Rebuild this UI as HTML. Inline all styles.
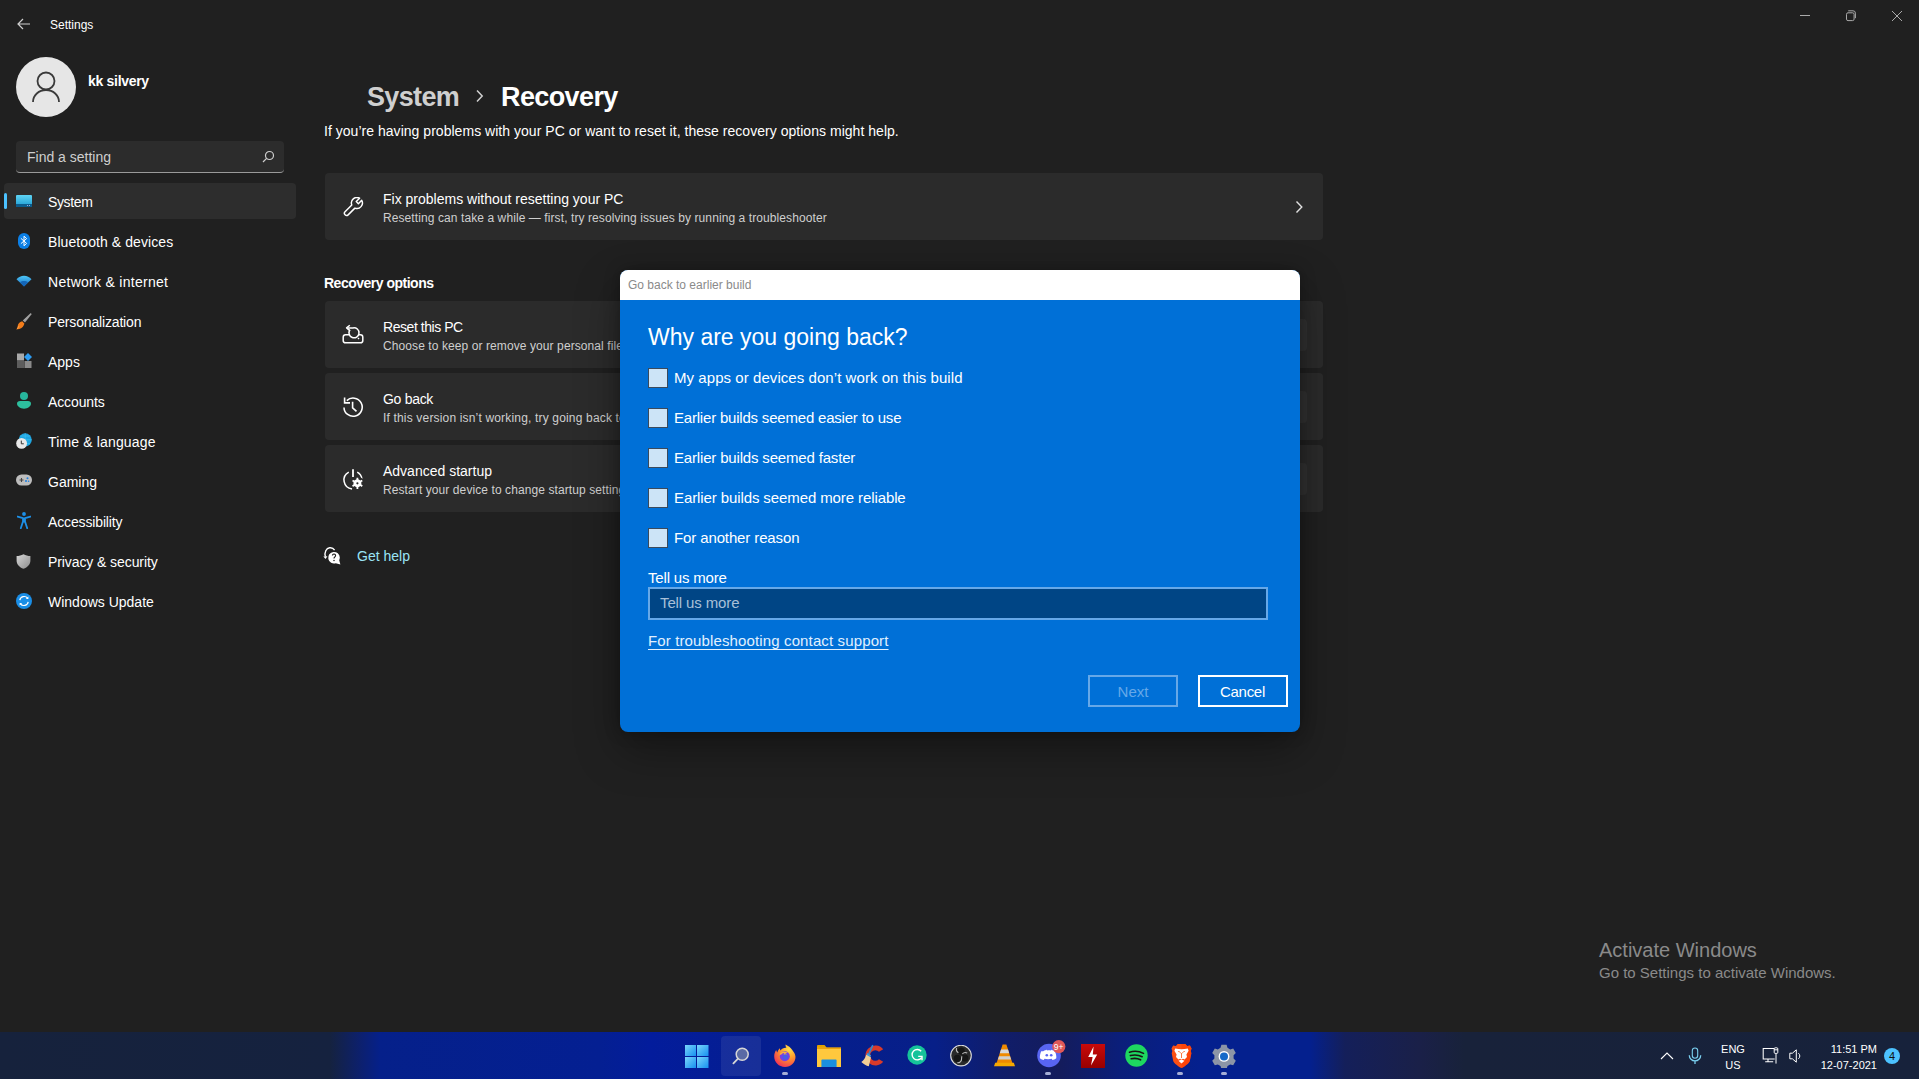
<!DOCTYPE html>
<html><head><meta charset="utf-8">
<style>
*{margin:0;padding:0;box-sizing:border-box}
html,body{width:1919px;height:1079px;overflow:hidden;background:#202020;font-family:"Liberation Sans",sans-serif;color:#fff}
.a{position:absolute;white-space:nowrap}
.nav{position:absolute;left:48px;font-size:14px;color:#fff;line-height:16px}
.ico{position:absolute}
.card{position:absolute;left:325px;width:998px;height:67px;background:#2b2b2b;border-radius:4px}
.ct{position:absolute;left:58px;top:18px;font-size:14px;color:#fff;line-height:16px}
.cs{position:absolute;left:58px;top:37.5px;font-size:12px;color:#cfcfcf;line-height:14px;letter-spacing:0.09px}
.cb{position:absolute;left:648px;width:20px;height:20px;background:#cce4f7;border:1px solid #3a4a5c}
.cl{position:absolute;left:674px;font-size:15px;color:#fff;line-height:18px}
</style></head><body>
<!-- title bar -->
<svg class="ico" style="left:17px;top:18px" width="14" height="12" viewBox="0 0 14 12"><path d="M6 1L1 6l5 5M1 6h12" stroke="#cfcfcf" stroke-width="1.2" fill="none"/></svg>
<div class="a" style="left:50px;top:18px;font-size:12px;line-height:14px;color:#fff">Settings</div>
<svg class="ico" style="left:1800px;top:15px" width="12" height="2"><rect width="10" height="1" fill="#aaa"/></svg>
<svg class="ico" style="left:1845px;top:10px" width="12" height="12" viewBox="0 0 12 12"><rect x="1.5" y="2.8" width="7.6" height="7.8" rx="1.5" stroke="#aaa" fill="none"/><path d="M3.2 0.8h4.8a2.4 2.4 0 0 1 2.4 2.4v5" stroke="#aaa" fill="none"/></svg>
<svg class="ico" style="left:1891px;top:10px" width="12" height="12" viewBox="0 0 12 12"><path d="M1 1l10 10M11 1L1 11" stroke="#aaa" stroke-width="1"/></svg>

<!-- profile -->
<div class="a" style="left:16px;top:57px;width:60px;height:60px;border-radius:50%;background:#e6e6e6"></div>
<svg class="ico" style="left:32px;top:71px" width="28" height="32" viewBox="0 0 28 32"><circle cx="14" cy="10" r="8.5" stroke="#3a3a3a" stroke-width="1.8" fill="none"/><path d="M1 31a13 12 0 0 1 26 0" stroke="#3a3a3a" stroke-width="1.8" fill="none"/></svg>
<div class="a" style="left:88px;top:72px;font-size:14px;font-weight:bold;line-height:18px;letter-spacing:-0.3px">kk silvery</div>

<!-- search -->
<div class="a" style="left:16px;top:141px;width:268px;height:32px;background:#2c2c2c;border-radius:4px;border-bottom:1px solid #9a9a9a"></div>
<div class="a" style="left:27px;top:149px;font-size:14px;line-height:16px;color:#cfcfcf">Find a setting</div>
<svg class="ico" style="left:262px;top:150px" width="13" height="13" viewBox="0 0 13 13"><circle cx="7.5" cy="5.5" r="4" stroke="#cfcfcf" stroke-width="1.2" fill="none"/><path d="M4.6 8.4L1 12" stroke="#cfcfcf" stroke-width="1.2"/></svg>

<!-- nav -->
<div class="a" style="left:4px;top:183px;width:292px;height:36px;background:#2d2d2d;border-radius:4px"></div>
<div class="a" style="left:4px;top:193px;width:3px;height:16px;background:#4cc2ff;border-radius:2px"></div>
<svg class="ico" style="left:16px;top:195px" width="16" height="12" viewBox="0 0 16 12"><defs><linearGradient id="gs" x1="0" y1="0" x2="0" y2="1"><stop offset="0" stop-color="#5fd4f4"/><stop offset="1" stop-color="#1b9ad0"/></linearGradient></defs><rect x="0" y="0" width="16" height="12" rx="1" fill="url(#gs)"/><rect x="0" y="9" width="16" height="3" fill="#0c5c8c"/><rect x="11" y="10" width="1" height="1" fill="#9ad"/><rect x="13" y="10" width="1" height="1" fill="#9ad"/></svg>
<svg class="ico" style="left:18px;top:233px" width="12" height="16" viewBox="0 0 12 16"><rect x="0" y="0" width="12" height="16" rx="6" fill="#0b7fe6"/><path d="M3.2 5.6L8.6 10.4 6 12.8V3.2l2.6 2.4L3.2 10.4" stroke="#fff" stroke-width="1" fill="none" stroke-linejoin="round" stroke-linecap="round"/></svg>
<svg class="ico" style="left:16px;top:275px" width="16" height="12" viewBox="0 0 16 12"><defs><linearGradient id="gw" x1="0" y1="0" x2="0" y2="1"><stop offset="0" stop-color="#4cc6f6"/><stop offset="1" stop-color="#1a6fc8"/></linearGradient></defs><path d="M0.5 4.2C2.5 2 5 0.8 8 0.8s5.5 1.2 7.5 3.4L8 11.5z" fill="url(#gw)"/><path d="M4 7.3C5.1 6.4 6.5 5.9 8 5.9s2.9.5 4 1.4L8 11.5z" fill="#1466b8"/></svg>
<svg class="ico" style="left:16px;top:313px" width="16" height="17" viewBox="0 0 16 17"><defs><linearGradient id="gbr" x1="0" y1="0" x2="1" y2="1"><stop offset="0" stop-color="#c8c8c8"/><stop offset="1" stop-color="#7a7a7a"/></linearGradient></defs><path d="M14.2 0.4c.8-.2 1.4.4 1.2 1.2L9 9.6 6.8 7.4z" fill="url(#gbr)"/><path d="M6.2 8.2l2.2 2.2c-.4 2.6-2.4 4.8-5.2 5.6-1 .3-2.2.4-3 .4.8-.8 1.2-1.8 1.4-3 .4-2.6 2-4.6 4.6-5.2z" fill="#f37c1a"/><path d="M1.4 15.8c.6-.8 1-1.6 1.4-2.6" stroke="#ffb060" stroke-width="0.8" fill="none"/></svg>
<svg class="ico" style="left:17px;top:353px" width="16" height="16" viewBox="0 0 16 16"><rect x="0" y="0.5" width="7" height="7" fill="#a9a9a9"/><rect x="0" y="8" width="7" height="7" fill="#5d5d5d"/><rect x="7.5" y="8" width="7" height="7" fill="#8a8a8a"/><path d="M11 0L15 4 11 8 7 4z" fill="#2d9cf2"/></svg>
<svg class="ico" style="left:17px;top:392px" width="14" height="17" viewBox="0 0 14 17"><circle cx="7" cy="4" r="4" fill="#27b59c"/><path d="M0 11.5C0 10 1.2 9 3 9h8c1.8 0 3 1 3 2.5 0 2.7-3 5.2-7 5.2s-7-2.5-7-5.2z" fill="#2dbf9e"/></svg>
<svg class="ico" style="left:16px;top:433px" width="16" height="16" viewBox="0 0 16 16"><circle cx="9.2" cy="6.8" r="6.6" fill="#1ea4e0"/><path d="M9.2 0.2v13.2M2.8 6.8h12.8M4.3 3h9.8M4.3 10.6h9.8" stroke="#3fc4f4" stroke-width="0.6"/><circle cx="5.6" cy="10.4" r="5.4" fill="#e8e8e8"/><path d="M5.3 7.6v3.2h2.5" stroke="#333" stroke-width="1" fill="none"/></svg>
<svg class="ico" style="left:16px;top:474px" width="16" height="12" viewBox="0 0 16 12"><rect x="0" y="0.5" width="16" height="11" rx="5.5" fill="#bdbdbd"/><path d="M3.5 6h4M5.5 4v4" stroke="#444" stroke-width="1.1"/><circle cx="11.5" cy="4.3" r="1" fill="#1e7fe0"/><circle cx="10" cy="7" r="1" fill="#1e7fe0"/><circle cx="12.6" cy="7.3" r="0.8" fill="#1e7fe0"/></svg>
<svg class="ico" style="left:17px;top:512px" width="14" height="17" viewBox="0 0 14 17"><circle cx="7" cy="2" r="1.9" fill="#1d8fe6"/><path d="M0.6 4.6L6 6.2v3.3L3.8 16.2M13.4 4.6L8 6.2v3.3l2.2 6.7M6 9.5h2" stroke="#1d8fe6" stroke-width="1.8" fill="none" stroke-linecap="round" stroke-linejoin="round"/><rect x="6" y="5.8" width="2" height="4" fill="#1d8fe6"/></svg>
<svg class="ico" style="left:16px;top:554px" width="15" height="15" viewBox="0 0 15 15"><defs><linearGradient id="gsh" x1="0" y1="0" x2="1" y2="1"><stop offset="0" stop-color="#d6d6d6"/><stop offset="1" stop-color="#8c8c8c"/></linearGradient></defs><path d="M7.5 0.3C5.3 1.5 3 2 0.6 2.1v4.3c0 4 2.8 6.7 6.9 8.3 4.1-1.6 6.9-4.3 6.9-8.3V2.1C12 2 9.7 1.5 7.5 0.3z" fill="url(#gsh)"/></svg>
<svg class="ico" style="left:16px;top:593px" width="16" height="16" viewBox="0 0 16 16"><circle cx="8" cy="8" r="8" fill="#1a8ee6"/><path d="M3.8 7.2A4.4 4.4 0 0 1 11.6 5.2M12.2 8.8A4.4 4.4 0 0 1 4.4 10.8" stroke="#fff" stroke-width="1.2" fill="none"/><path d="M12.4 3.4v2.6H9.8z" fill="#fff"/><path d="M3.6 12.6V10h2.6z" fill="#fff"/></svg>
<div class="nav" style="top:194px;letter-spacing:-0.36px">System</div>
<div class="nav" style="top:234px;letter-spacing:0.08px">Bluetooth &amp; devices</div>
<div class="nav" style="top:274px;letter-spacing:0.28px">Network &amp; internet</div>
<div class="nav" style="top:314px;letter-spacing:-0.16px">Personalization</div>
<div class="nav" style="top:354px">Apps</div>
<div class="nav" style="top:394px;letter-spacing:-0.12px">Accounts</div>
<div class="nav" style="top:434px;letter-spacing:0.15px">Time &amp; language</div>
<div class="nav" style="top:474px">Gaming</div>
<div class="nav" style="top:514px;letter-spacing:-0.14px">Accessibility</div>
<div class="nav" style="top:554px;letter-spacing:-0.09px">Privacy &amp; security</div>
<div class="nav" style="top:594px">Windows Update</div>

<!-- main -->
<div class="a" style="left:367px;top:81px;font-size:27px;line-height:32px;color:#cfcfcf;font-weight:bold;letter-spacing:-0.65px">System</div>
<svg class="ico" style="left:474px;top:89px" width="12" height="14" viewBox="0 0 12 14"><path d="M3 1.5l5.2 5.5L3 12.5" stroke="#cfcfcf" stroke-width="1.5" fill="none"/></svg>
<div class="a" style="left:501px;top:81px;font-size:27px;line-height:32px;color:#fff;font-weight:bold;letter-spacing:-0.6px">Recovery</div>
<div class="a" style="left:324px;top:123px;font-size:14px;line-height:16px;color:#fff;letter-spacing:0.03px">If you’re having problems with your PC or want to reset it, these recovery options might help.</div>

<div class="card" style="top:173px"><div class="ct">Fix problems without resetting your PC</div><div class="cs">Resetting can take a while — first, try resolving issues by running a troubleshooter</div></div>
<svg class="ico" style="left:343px;top:197px" width="21" height="21" viewBox="0 0 21 21"><path d="M8.78 8.01A5.5 5.5 0 0 1 16.58 1.20L13.26 4.52L15.38 6.64L18.70 3.32A5.5 5.5 0 0 1 11.89 11.12L5.13 17.88A2.2 2.2 0 0 1 2.02 14.77Z" stroke="#fff" stroke-width="1.45" fill="none" stroke-linejoin="round"/></svg>
<svg class="ico" style="left:1293.5px;top:200px" width="10" height="14" viewBox="0 0 10 14"><path d="M2.5 1.5L7.8 7 2.5 12.5" stroke="#e0e0e0" stroke-width="1.4" fill="none"/></svg>
<div class="a" style="left:324px;top:275px;font-size:14px;line-height:16px;font-weight:bold;letter-spacing:-0.5px">Recovery options</div>
<div class="card" style="top:301px"><div class="ct" style="letter-spacing:-0.45px">Reset this PC</div><div class="cs">Choose to keep or remove your personal files, then reinstall Windows</div></div>
<div class="card" style="top:373px"><div class="ct" style="letter-spacing:-0.3px">Go back</div><div class="cs" style="letter-spacing:0.17px">If this version isn’t working, try going back to Windows 10</div></div>
<div class="card" style="top:445px"><div class="ct">Advanced startup</div><div class="cs">Restart your device to change startup settings, including starting from discs or USB drives</div></div>
<div class="a" style="left:1200px;top:319px;width:107px;height:32px;background:#333;border-radius:4px"></div>
<div class="a" style="left:1200px;top:391px;width:107px;height:32px;background:#333;border-radius:4px"></div>
<div class="a" style="left:1200px;top:463px;width:107px;height:32px;background:#333;border-radius:4px"></div>
<svg class="ico" style="left:342px;top:324px" width="22" height="20" viewBox="0 0 22 20"><rect x="1.2" y="10.8" width="19.6" height="8" rx="2.4" stroke="#fff" stroke-width="1.5" fill="none"/><path d="M8 5.8a5 5 0 1 0 3-1.9H6" stroke="#fff" stroke-width="1.5" fill="#2b2b2b"/><path d="M7.8 1.2L4.6 3.9 7.8 6.6" stroke="#fff" stroke-width="1.5" fill="none" stroke-linejoin="round"/><path d="M16.5 13.5l1 1-1 1-1-1z" fill="#fff"/></svg>
<svg class="ico" style="left:342px;top:396px" width="22" height="22" viewBox="0 0 22 22"><path d="M2 11.4A9.1 9.1 0 1 0 4.8 4.6" stroke="#fff" stroke-width="1.55" fill="none"/><path d="M2.6 1.5v5.4H8" stroke="#fff" stroke-width="1.6" fill="none"/><path d="M10.6 5.8v6l3.9 3.6" stroke="#fff" stroke-width="1.6" fill="none"/></svg>
<svg class="ico" style="left:342px;top:468px" width="23" height="23" viewBox="0 0 23 23"><path d="M6.77 4.05A9 9 0 0 0 10.06 20.95M15.23 4.05A9 9 0 0 1 19.91 10.75" stroke="#fff" stroke-width="1.5" fill="none"/><path d="M11 1.2v7.8" stroke="#fff" stroke-width="1.8"/><circle cx="15.4" cy="15.3" r="6.8" fill="#2b2b2b"/><path d="M14.48 11.31L14.51 9.67L16.29 9.67L16.32 11.31L18.40 12.50L19.83 11.71L20.72 13.26L19.32 14.10L19.32 16.50L20.72 17.34L19.83 18.89L18.40 18.10L16.32 19.29L16.29 20.93L14.51 20.93L14.48 19.29L12.40 18.10L10.97 18.89L10.08 17.34L11.48 16.50L11.48 14.10L10.08 13.26L10.97 11.71L12.40 12.50Z" fill="#fff"/><circle cx="15.4" cy="15.3" r="1.1" fill="#2b2b2b"/></svg>
<svg class="ico" style="left:323px;top:546px" width="19" height="20" viewBox="0 0 19 20"><path d="M2.4 10.6C1.2 6.4 3.2 2.2 6.6 1.8 8.8 1.5 10.6 2.6 11.6 4.2" stroke="#fff" stroke-width="1.4" fill="none"/><path d="M0.4 10.4l2.2 2.6 1.8-2.8z" fill="#fff"/><path d="M16.8 11.6A5.8 5.8 0 1 0 12.8 17.2L17.4 18.4 16.2 14.2A5.8 5.8 0 0 0 16.8 11.6z" fill="#fff"/><path d="M9.4 9.6a1.6 1.6 0 1 1 2.4 1.4c-.6.4-.8.8-.8 1.4" stroke="#1f1f1f" stroke-width="1.1" fill="none"/><circle cx="11" cy="14.6" r="0.75" fill="#1f1f1f"/></svg>
<div class="a" style="left:357px;top:548px;font-size:14px;line-height:16px;color:#9ae4f6">Get help</div>

<!-- dialog -->
<div class="a" style="left:620px;top:270px;width:680px;height:462px;border-radius:8px;background:#0070d7;overflow:hidden;box-shadow:0 18px 44px rgba(0,0,0,.34),0 0 16px rgba(0,0,0,.28)">
  <div style="position:absolute;left:0;top:0;width:680px;height:30px;background:#fff"></div>
</div>
<div class="a" style="left:628px;top:278px;font-size:12px;line-height:14px;color:#8a8a8a">Go back to earlier build</div>
<div class="a" style="left:648px;top:323px;font-size:23px;line-height:28px;color:#fff">Why are you going back?</div>
<div class="cb" style="top:368px"></div><div class="cl" style="top:369px;letter-spacing:0.06px">My apps or devices don’t work on this build</div>
<div class="cb" style="top:408px"></div><div class="cl" style="top:409px;letter-spacing:-0.2px">Earlier builds seemed easier to use</div>
<div class="cb" style="top:448px"></div><div class="cl" style="top:449px;letter-spacing:-0.17px">Earlier builds seemed faster</div>
<div class="cb" style="top:488px"></div><div class="cl" style="top:489px;letter-spacing:-0.1px">Earlier builds seemed more reliable</div>
<div class="cb" style="top:528px"></div><div class="cl" style="top:529px;letter-spacing:-0.12px">For another reason</div>
<div class="a" style="left:648px;top:569px;font-size:15px;line-height:18px;letter-spacing:-0.18px">Tell us more</div>
<div class="a" style="left:648px;top:587px;width:620px;height:33px;background:#004585;border:2px solid #66a8e8"></div>
<div class="a" style="left:660px;top:594px;font-size:15px;line-height:18px;color:#a8c0d8;letter-spacing:-0.12px">Tell us more</div>
<div class="a" style="left:648px;top:632px;font-size:15px;line-height:18px;color:#e0f0ff;text-decoration:underline;text-underline-offset:3px;letter-spacing:0.13px">For troubleshooting contact support</div>
<div class="a" style="left:1088px;top:675px;width:90px;height:32px;border:2px solid #66a8e8;font-size:15px;line-height:30px;text-align:center;color:#66a8e8">Next</div>
<div class="a" style="left:1198px;top:675px;width:90px;height:32px;border:2px solid #fff;font-size:15px;line-height:30px;text-align:center;color:#fff;letter-spacing:-0.3px;text-indent:-1px">Cancel</div>

<!-- watermark -->
<div class="a" style="left:1599px;top:939px;font-size:20px;line-height:22px;color:#8a8a8a">Activate Windows</div>
<div class="a" style="left:1599px;top:964px;font-size:15px;line-height:18px;color:#8a8a8a">Go to Settings to activate Windows.</div>

<!-- taskbar -->
<div class="a" style="left:0;top:1032px;width:1919px;height:47px;background:linear-gradient(90deg,#16223c 0px,#15223f 330px,#0c2070 362px,#05208a 380px,#041f92 600px,#031c9c 650px,#051e90 760px,#071f88 935px,#101d6a 1000px,#141c5c 1060px,#0b1e7a 1120px,#04208e 1200px,#04208e 1310px,#141f5a 1345px,#1a2048 1420px,#18223a 1465px,#17223b 1919px)"></div>
<!-- start -->
<svg class="ico" style="left:685px;top:1045px" width="24" height="23" viewBox="0 0 24 23"><defs><linearGradient id="gst" x1="0" y1="0" x2="1" y2="1"><stop offset="0" stop-color="#7ad6fb"/><stop offset="1" stop-color="#1590f0"/></linearGradient></defs><rect x="0" y="0" width="11" height="11" fill="url(#gst)"/><rect x="12" y="0" width="11.5" height="11" fill="url(#gst)"/><rect x="0" y="12" width="11" height="11" fill="url(#gst)"/><rect x="12" y="12" width="11.5" height="11" fill="url(#gst)"/></svg>
<!-- search -->
<div class="a" style="left:721px;top:1036px;width:40px;height:40px;border-radius:4px;background:rgba(255,255,255,0.08)"></div>
<svg class="ico" style="left:731px;top:1046px" width="20" height="20" viewBox="0 0 20 20"><circle cx="11.2" cy="8.3" r="6" fill="#5a6aa5" stroke="#d6d6d6" stroke-width="1.5"/><path d="M7 12.6L2.4 17.4" stroke="#d6d6d6" stroke-width="1.8" stroke-linecap="round"/></svg>
<!-- firefox -->
<svg class="ico" style="left:773px;top:1044px" width="24" height="24" viewBox="0 0 24 24"><defs><radialGradient id="gff" cx="0.7" cy="0.2" r="0.9"><stop offset="0" stop-color="#ffe14a"/><stop offset="0.45" stop-color="#ff9a2a"/><stop offset="1" stop-color="#f22c5a"/></radialGradient></defs><path d="M12 23C5.8 23 1.2 18.3 1.2 12.3c0-2.4.8-4.6 2-6.3.2 1.2.7 2 1.2 2.4.4-2 1.4-3.4 2.6-4.2-.1 1 .1 1.8.5 2.3C9 4.5 11 3.6 13.5 3.9 12.6 2.8 12.4 1.6 12.6.6c2.8 1.5 5 3 6.5 5.2 1.7 2.3 3.2 4.3 3.4 7 .1 5.8-4.5 10.2-10.5 10.2z" fill="url(#gff)"/><circle cx="11.8" cy="12.2" r="5" fill="#7b3fe4"/><path d="M7.2 10.5c1.3-1.9 3.6-2.6 5.6-1.8-.9.3-1.4 1-1.3 1.8 1.4.2 2.4 1.2 2.4 2.5" stroke="#ffb43a" stroke-width="1.4" fill="none"/><circle cx="12.3" cy="13" r="2.8" fill="#4a5ce8"/></svg>
<div class="a" style="left:782px;top:1072px;width:6px;height:3px;border-radius:2px;background:#a5aed6"></div>
<!-- explorer -->
<svg class="ico" style="left:817px;top:1045px" width="24" height="22" viewBox="0 0 24 22"><path d="M0 1.2C0 .5.5 0 1.2 0h6.3l2.2 2.5H24V6H0z" fill="#e2a200"/><rect x="0" y="2.8" width="24" height="19.2" fill="#ffc83d"/><rect x="0" y="2.8" width="24" height="1" fill="#e89a00"/><path d="M4.4 22V15.6c0-.6.5-1 1-1h13.2c.6 0 1 .4 1 1V22z" fill="#1a8fe0"/></svg>
<!-- ccleaner -->
<svg class="ico" style="left:861px;top:1044px" width="25" height="23" viewBox="0 0 25 23"><path d="M22.2 5.2A10 10 0 1 0 22.2 17.8L18 15.2a5.2 5.2 0 1 1 0-7.4z" fill="#d83a2a"/><path d="M11.8 1.2L7.6 10.5" stroke="#2a8bd6" stroke-width="1.6"/><path d="M6 9l4 2.2-1 2.5-3.5-2z" fill="#3a9ae0"/><path d="M5.2 10.8l4.8 2.6-2.2 8.8c-2.6-.5-5-1.8-7.5-4.2 2.2-1.2 3.8-3.6 4.9-7.2z" fill="#f2cf96"/></svg>
<!-- grammarly -->
<svg class="ico" style="left:907px;top:1045px" width="20" height="20" viewBox="0 0 20 20"><circle cx="10" cy="10" r="9.7" fill="#15c39a"/><path d="M14.2 6.2A5.2 5.2 0 1 0 14.6 12.6" stroke="#fff" stroke-width="1.4" fill="none"/><path d="M11.2 11.4h3.8v3.8" stroke="#fff" stroke-width="1.4" fill="none"/></svg>
<!-- obs -->
<svg class="ico" style="left:950px;top:1045px" width="22" height="22" viewBox="0 0 22 22"><circle cx="11" cy="10.6" r="10.3" fill="#2a2a2a" stroke="#dcdcdc" stroke-width="1.1"/><circle cx="11.2" cy="6.2" r="3.6" fill="#151515"/><circle cx="7.3" cy="13.3" r="3.6" fill="#151515"/><circle cx="14.8" cy="13" r="3.6" fill="#151515"/><path d="M6.6 3.2c-.6 1.8.2 3.6 1.8 4.5M17.2 8c-1.6-.8-3.6-.5-4.8.8M7.4 17.6c1.6.4 3.6-.6 4-2.4l.4-4" stroke="#bdbdbd" stroke-width="1.1" fill="none"/></svg>
<!-- vlc -->
<svg class="ico" style="left:994px;top:1044px" width="21" height="23" viewBox="0 0 21 23"><path d="M8.6 0.5h3.8l7 21.5H1.6z" fill="#f08a00"/><path d="M7 5.5h7l1.2 3.8H5.8z" fill="#d8d8d8"/><path d="M5 12.2h11l1.1 3.3H3.9z" fill="#d0d0d0"/><path d="M1.2 18.8h18.6l1.2 3.4H0z" fill="#f6a800"/></svg>
<!-- discord -->
<svg class="ico" style="left:1037px;top:1040px" width="30" height="28" viewBox="0 0 30 28"><circle cx="12" cy="15.5" r="11.8" fill="#5865f2"/><path d="M6.2 11.2c1.6-1 3.4-1.5 3.4-1.5l.4.7c1.3-.2 2.7-.2 4 0l.4-.7s1.8.5 3.4 1.5c1.2 2.3 1.7 4.7 1.5 7-1.4 1-2.8 1.6-3.8 1.8l-.8-1.2c-2.3.5-4.9.5-7.2 0l-.8 1.2c-1-.2-2.4-.8-3.8-1.8-.2-2.3.3-4.7 1.3-7z" fill="#fff"/><circle cx="9.8" cy="15.2" r="1.3" fill="#5865f2"/><circle cx="14.2" cy="15.2" r="1.3" fill="#5865f2"/><circle cx="21.8" cy="6.6" r="6.6" fill="#e05858"/><text x="21.6" y="9.5" font-size="8.5" font-family="Liberation Sans" fill="#fff" text-anchor="middle">9+</text></svg>
<div class="a" style="left:1045px;top:1072px;width:6px;height:3px;border-radius:2px;background:#a5aed6"></div>
<!-- wps / red -->
<svg class="ico" style="left:1081px;top:1044px" width="24" height="24" viewBox="0 0 24 24"><defs><linearGradient id="grd" x1="0" y1="0" x2="0" y2="1"><stop offset="0" stop-color="#c80a0a"/><stop offset="1" stop-color="#980000"/></linearGradient></defs><rect width="24" height="24" fill="url(#grd)"/><path d="M12.6 2.6L7.2 13h4.4l-1.6 8.6 6.2-11h-4.4z" fill="#fff"/></svg>
<!-- spotify -->
<svg class="ico" style="left:1125px;top:1044px" width="23" height="23" viewBox="0 0 23 23"><circle cx="11.5" cy="11.5" r="11.2" fill="#1ed760"/><path d="M4.5 8.2c4.5-1.4 9.8-1 14 1.2M5.4 11.6c3.8-1.1 8.2-.7 11.8 1.1M6.2 14.8c3.2-.8 6.6-.5 9.4 1" stroke="#191414" stroke-width="1.6" fill="none" stroke-linecap="round"/></svg>
<!-- brave -->
<svg class="ico" style="left:1171px;top:1044px" width="21" height="24" viewBox="0 0 21 24"><path d="M6.6 0h7.8l1.8 2 2.8-.4 1.6 2.8-.8 2.6.6 2.2L18.8 17c-1 2.4-5 5.6-8.3 7C7.2 22.6 3.2 19.4 2.2 17L.7 9.2l.6-2.2-.8-2.6L2.1 1.6 4.9 2z" fill="#fb4f14"/><path d="M10.5 24c3.3-1.4 7.3-4.6 8.3-7L20.3 9.2l-.6-2.2.8-2.6-1.6-2.8-2.8.4-1.7-2H10.5z" fill="#ff3d00" opacity="0.6"/><path d="M4.2 4.4c2 .5 4.4.8 6.3.8s4.3-.3 6.3-.8l.8 2.4-2.2 3.8.6 2.4-2.4 2.6-1.6-.8-1.5.6-1.5-.6-1.6.8-2.4-2.6.6-2.4-2.2-3.8z" fill="#fff"/><path d="M7.5 16.8l3 2.6 3-2.6-3-1.2z" fill="#fff"/><path d="M7.2 7.4c1 .2 2 .7 2.6 1.6M13.8 7.4c-1 .2-2 .7-2.6 1.6M10.5 9v5" stroke="#fb6a2a" stroke-width="0.9" fill="none"/></svg>
<div class="a" style="left:1177px;top:1072px;width:6px;height:3px;border-radius:2px;background:#a5aed6"></div>
<!-- settings -->
<svg class="ico" style="left:1212px;top:1044px" width="24" height="24" viewBox="0 0 24 24"><path d="M9.4 0.8h5.2l.9 3 2.7 1.6 3-.8 2.6 4.5-2.2 2.2v3.2l2.2 2.2-2.6 4.5-3-.8-2.7 1.6-.9 3H9.4l-.9-3-2.7-1.6-3 .8L.2 16.7l2.2-2.2v-3.2L.2 9.1l2.6-4.5 3 .8 2.7-1.6z" fill="#8c95a6"/><circle cx="12" cy="12.4" r="5.4" fill="#fff"/><circle cx="12" cy="12.4" r="4" fill="#1469c8"/></svg>
<div class="a" style="left:1221px;top:1072px;width:6px;height:3px;border-radius:2px;background:#a5aed6"></div>
<!-- tray -->
<svg class="ico" style="left:1660px;top:1051px" width="14" height="9" viewBox="0 0 14 9"><path d="M1 8L7 2l6 6" stroke="#fff" stroke-width="1.1" fill="none"/></svg>
<svg class="ico" style="left:1688px;top:1047px" width="14" height="18" viewBox="0 0 14 18"><rect x="4.3" y="1" width="5.4" height="10.2" rx="2.7" stroke="#7ad0f0" stroke-width="1.1" fill="none"/><path d="M1.3 8.2a5.7 5.7 0 0 0 11.4 0M7 13.9V17" stroke="#7ad0f0" stroke-width="1.3" fill="none"/></svg>
<div class="a" style="left:1720px;top:1041px;width:26px;font-size:11px;line-height:16px;text-align:center;color:#fff">ENG<br>US</div>
<svg class="ico" style="left:1762px;top:1047px" width="18" height="18" viewBox="0 0 18 18"><path d="M12 1.5H1.2v10.5h11.5M6 12v2.5M3.2 14.8h8" stroke="#fff" stroke-width="1.05" fill="none"/><rect x="12.2" y="0.8" width="3.6" height="5.6" rx="1" stroke="#fff" stroke-width="1" fill="none"/><path d="M12.2 2.8h3.6M14 6.4V16.6" stroke="#fff" stroke-width="1"/></svg>
<svg class="ico" style="left:1789px;top:1049px" width="12" height="14" viewBox="0 0 12 14"><path d="M0.8 4.2h2.6L7.3 0.8v12.4L3.4 9.8H0.8z" stroke="#fff" stroke-width="1" fill="none" stroke-linejoin="round"/><path d="M9.4 4.2a3.5 3.5 0 0 1 0 5.6" stroke="#fff" stroke-width="1" fill="none"/></svg>
<div class="a" style="left:1800px;top:1042px;width:77px;font-size:11px;line-height:15.5px;text-align:right;color:#fff">11:51 PM<br>12-07-2021</div>
<div class="a" style="left:1884px;top:1048px;width:16px;height:16px;border-radius:50%;background:#4cc2ff"></div>
<div class="a" style="left:1884px;top:1049px;width:16px;font-size:11px;line-height:14px;text-align:center;color:#111">4</div>
</body></html>
